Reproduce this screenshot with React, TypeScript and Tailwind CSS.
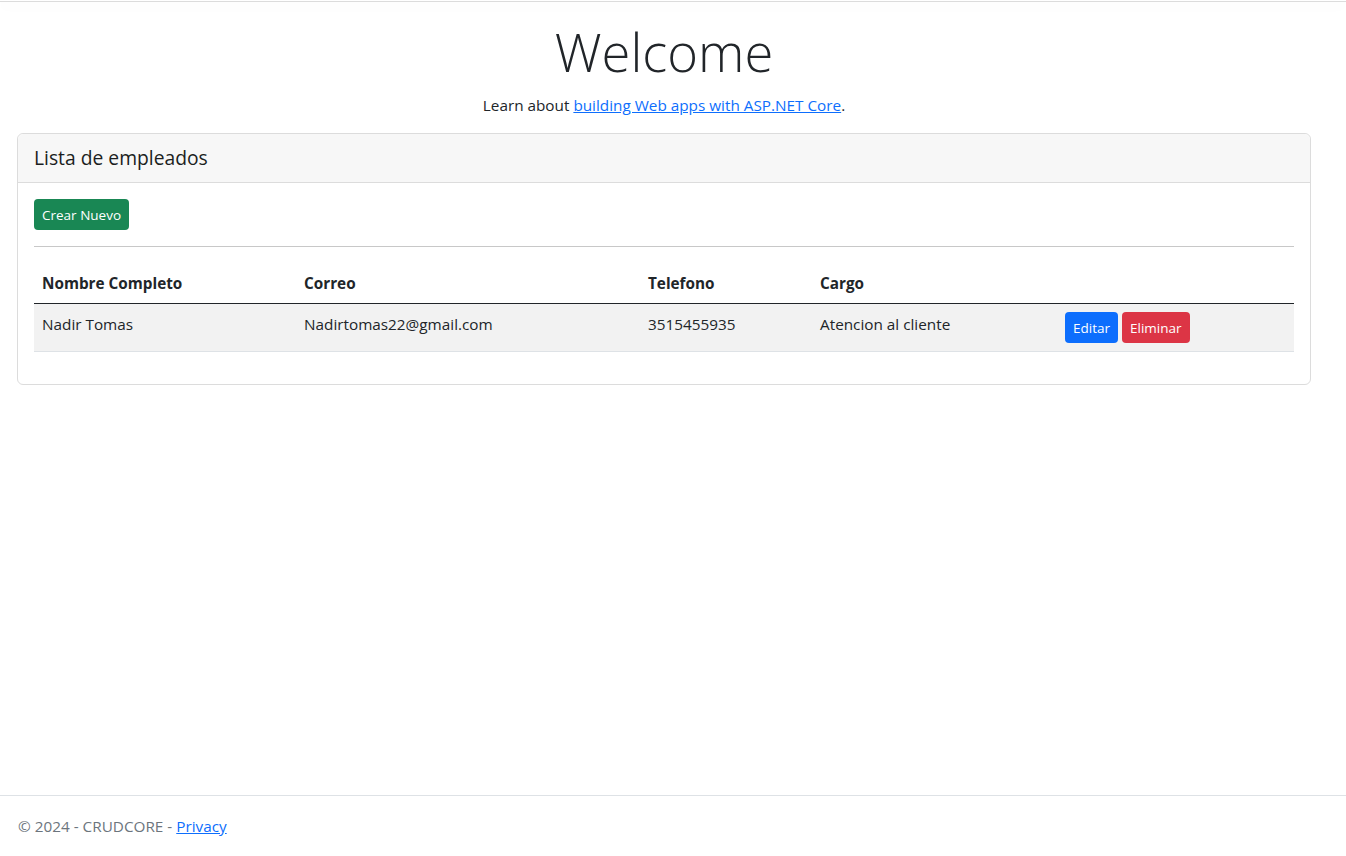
export default function App() {
  return (
    <div
      className="min-h-[856px] flex flex-col bg-white text-[#212529] text-[15.3px] leading-6"
      style={{ fontFamily: '"Open Sans", "Noto Sans", sans-serif' }}
    >
      {/* línea del navbar */}
      <div className="h-[2px] border-b border-[#dcdcdc] shadow-[0_4px_12px_rgba(0,0,0,0.05)]" />

      <main className="flex-1 pl-[17px] pr-[35px] pt-[16px]">
        <div className="text-center">
          <h1 className="text-[52.5px] font-light leading-[67px] mb-2">Welcome</h1>
          <p>
            Learn about{' '}
            <a href="#" className="text-[#0d6efd] underline">
              building Web apps with ASP.NET Core
            </a>
            .
          </p>
        </div>

        <div className="mt-4 border border-[#dcdcdc] rounded-md">
          <div className="bg-[#f7f7f7] border-b border-[#dcdcdc] px-4 h-[49px] flex items-center rounded-t-md">
            <h5 className="text-[19.3px] font-medium text-[#1b1e21]">Lista de empleados</h5>
          </div>
          <div className="p-4">
            <button className="bg-[#198754] text-white text-[13.5px] h-[31px] px-2 rounded">
              Crear Nuevo
            </button>
            <hr className="my-4 border-t border-[#c8c8c8]" />
            <table className="w-full border-collapse">
              <thead>
                <tr className="border-b border-[#212529] text-left">
                  <th className="w-[262px] px-2 py-2 font-bold">Nombre Completo</th>
                  <th className="w-[344px] px-2 py-2 font-bold">Correo</th>
                  <th className="w-[172px] px-2 py-2 font-bold">Telefono</th>
                  <th className="w-[245px] px-2 py-2 font-bold">Cargo</th>
                  <th className="px-2 py-2" />
                </tr>
              </thead>
              <tbody>
                <tr className="bg-[#f2f2f2] border-b border-[#dee2e6] align-top">
                  <td className="px-2 py-2 h-[48px]">Nadir Tomas</td>
                  <td className="px-2 py-2">Nadirtomas22@gmail.com</td>
                  <td className="px-2 py-2">3515455935</td>
                  <td className="px-2 py-2">Atencion al cliente</td>
                  <td className="px-2 pt-2 pb-1">
                    <div className="flex gap-1">
                      <button className="bg-[#0d6efd] text-white text-[13.5px] h-[31px] px-2 rounded">
                        Editar
                      </button>
                      <button className="bg-[#dc3545] text-white text-[13.5px] h-[31px] px-2 rounded">
                        Eliminar
                      </button>
                    </div>
                  </td>
                </tr>
              </tbody>
            </table>
            <div className="h-4" />
          </div>
        </div>
      </main>

      <footer className="border-t border-[#dee2e6] h-[61px] flex items-center pl-[18px] text-[#6c757d]">
        <span>
          © 2024 - CRUDCORE -{' '}
          <a href="#" className="text-[#0d6efd] underline">
            Privacy
          </a>
        </span>
      </footer>
    </div>
  )
}
